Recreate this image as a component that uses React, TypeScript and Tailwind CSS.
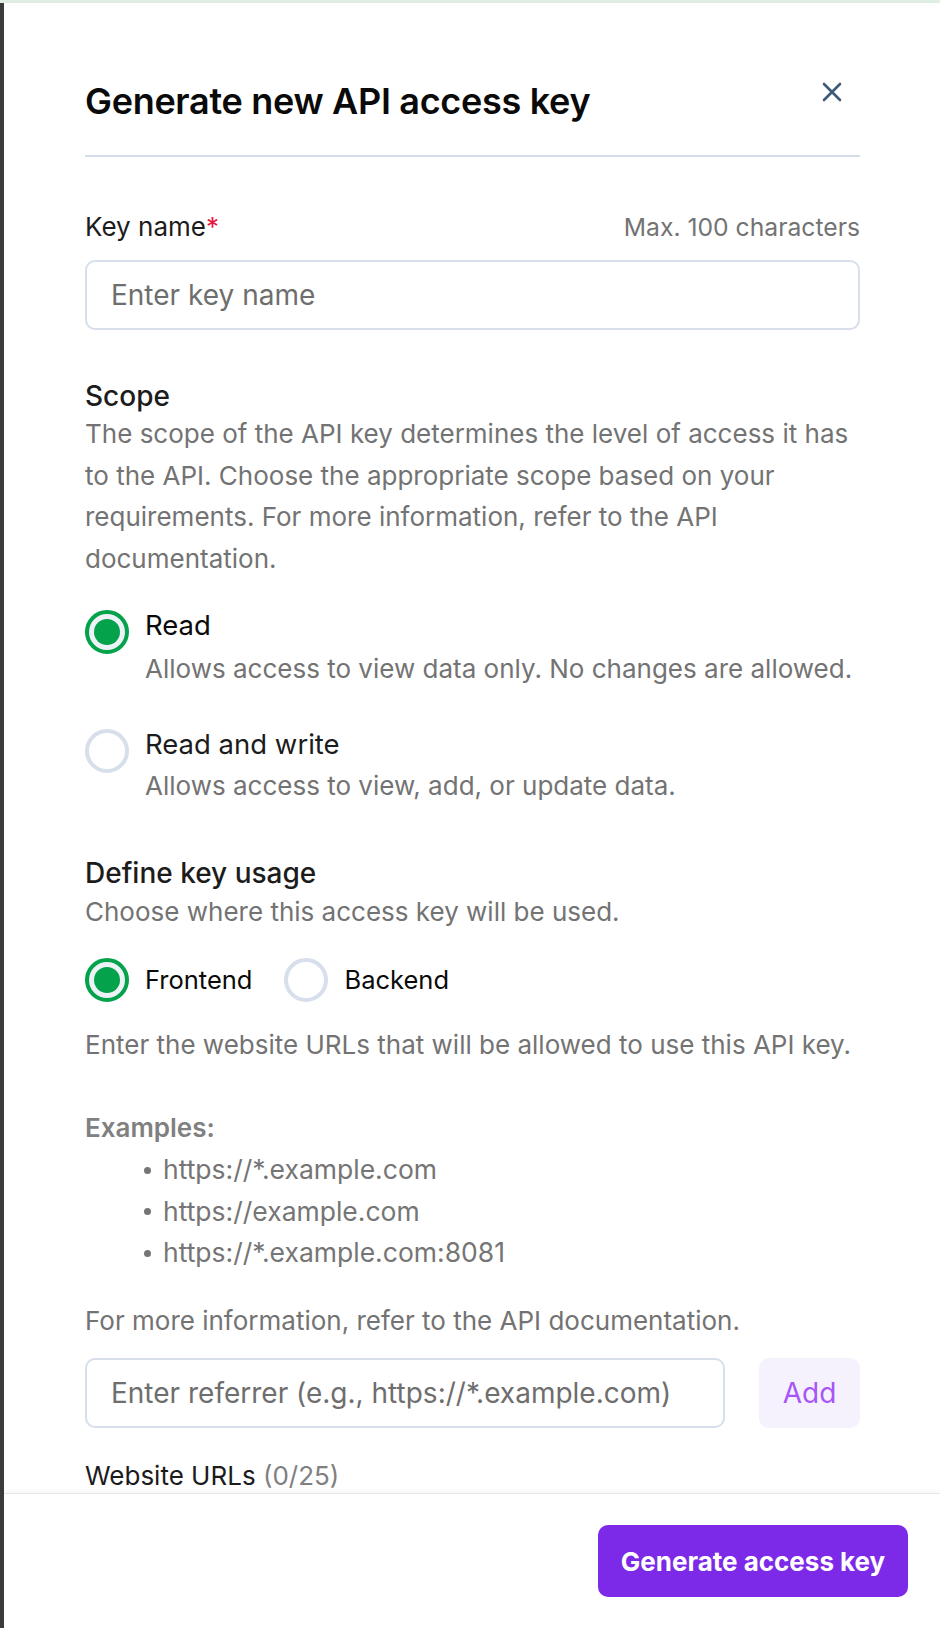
import React from "react";

function Radio({ checked }: { checked: boolean }) {
  return checked ? (
    <span className="flex h-[44px] w-[44px] shrink-0 items-center justify-center rounded-full border-[4px] border-[#03a24b] bg-[#eef2f6]">
      <span className="block h-[26px] w-[26px] rounded-full bg-[#03a24b]" />
    </span>
  ) : (
    <span className="block h-[44px] w-[44px] shrink-0 rounded-full border-[4px] border-[#d6dfea] bg-white" />
  );
}

export default function App() {
  return (
    <div
      className="flex h-[1628px] w-[940px] flex-col overflow-hidden bg-white"
      style={{ fontFamily: "Inter, 'Noto Sans', sans-serif" }}
    >
      <div className="h-[3px] w-full shrink-0 bg-[#e0ede4]" />
      <div className="flex min-h-0 flex-1">
        <div className="w-[4px] shrink-0 bg-[#3b3b3b]" />
        <div className="flex min-w-0 flex-1 flex-col">
          <div className="min-h-0 flex-1 overflow-hidden pl-[81px] pr-[80px] pt-[80px]">
            <div className="flex items-start justify-between border-b-2 border-[#d5dee8] pb-[36px]">
              <h1 className="text-[36px] font-semibold leading-[36px] tracking-[-0.3px] text-[#0a0a0a]">
                Generate new API access key
              </h1>
              <button className="mr-[18px] mt-[-1px] text-[#3d5a78]" aria-label="Close">
                <svg width="20" height="20" viewBox="0 0 20 20" fill="none" stroke="currentColor" strokeWidth="2.6" strokeLinecap="round">
                  <path d="M2 2L18 18M18 2L2 18" />
                </svg>
              </button>
            </div>

            <div className="mt-[54px] flex items-center justify-between">
              <span className="text-[26px] leading-[32px] text-[#1c1c1c]">
                Key name<span className="text-[#e8173d]">*</span>
              </span>
              <span className="text-[24.7px] leading-[32px] text-[#737373]">Max. 100 characters</span>
            </div>
            <input
              className="mt-[17px] h-[70px] w-full rounded-[10px] border-2 border-[#d6dfea] px-[24px] text-[28px] text-[#1c1c1c] outline-none placeholder:text-[#6e6e6e]"
              placeholder="Enter key name"
            />

            <div className="mt-[50px] text-[28px] font-medium leading-[32px] text-[#1c1c1c]">Scope</div>
            <p className="mt-[1px] text-[26px] leading-[41.6px] text-[#737373]">
              The scope of the API key determines the level of access it has to the API. Choose the appropriate scope
              based on your requirements. For more information, refer to the API documentation.
            </p>

            <div className="mt-[28px] flex items-start gap-[16px]">
              <div className="mt-[3px]">
                <Radio checked />
              </div>
              <div>
                <div className="text-[27.5px] leading-[36px] text-[#0a0a0a]">Read</div>
                <div className="mt-[8px] text-[26px] leading-[36px] text-[#737373]">
                  Allows access to view data only. No changes are allowed.
                </div>
              </div>
            </div>

            <div className="mt-[39px] flex items-start gap-[16px]">
              <div className="mt-[3px]">
                <Radio checked={false} />
              </div>
              <div>
                <div className="text-[27.5px] leading-[36px] text-[#1c1c1c]">Read and write</div>
                <div className="mt-[6px] text-[26px] leading-[36px] text-[#737373]">
                  Allows access to view, add, or update data.
                </div>
              </div>
            </div>

            <div className="mt-[53px] text-[28px] font-medium leading-[32px] text-[#1c1c1c]">Define key usage</div>
            <p className="mt-[2px] text-[26px] leading-[42px] text-[#737373]">Choose where this access key will be used.</p>

            <div className="mt-[25px] flex items-center gap-[32px]">
              <div className="flex items-center gap-[16px]">
                <Radio checked />
                <span className="text-[25.5px] leading-[36px] text-[#0a0a0a]">Frontend</span>
              </div>
              <div className="flex items-center gap-[16px]">
                <Radio checked={false} />
                <span className="text-[25.5px] leading-[36px] text-[#0a0a0a]">Backend</span>
              </div>
            </div>

            <p className="mt-[22px] text-[26px] leading-[42px] text-[#737373]">
              Enter the website URLs that will be allowed to use this API key.
            </p>

            <div className="mt-[41px] text-[26px] font-semibold leading-[42px] text-[#808080]">Examples:</div>
            <ul className="pl-[59px]">
              {["https://*.example.com", "https://example.com", "https://*.example.com:8081"].map((u) => (
                <li key={u} className="flex items-center gap-[12px] text-[26.5px] leading-[41.5px] text-[#757575]">
                  <span className="block h-[7px] w-[7px] rounded-full bg-[#757575]" />
                  {u}
                </li>
              ))}
            </ul>

            <p className="mt-[26px] text-[26px] leading-[42px] text-[#737373]">
              For more information, refer to the API documentation.
            </p>

            <div className="mt-[16px] flex items-center gap-[34px]">
              <input
                className="h-[70px] min-w-0 flex-1 rounded-[10px] border-2 border-[#d6dfea] px-[24px] text-[28px] text-[#1c1c1c] outline-none placeholder:text-[#6e6e6e]"
                placeholder="Enter referrer (e.g., https://*.example.com)"
              />
              <button className="h-[70px] w-[101px] rounded-[10px] bg-[#f5f2fe] text-[28px] text-[#a855f7]">Add</button>
            </div>

            <div className="mt-[32px] text-[26px] leading-[32px] text-[#1c1c1c]">
              Website URLs <span className="text-[#808080]">(0/25)</span>
            </div>
          </div>

          <div className="flex h-[135px] shrink-0 items-start justify-end border-t border-[#e3e7ec] bg-white pr-[32px] pt-[31px] shadow-[0_-2px_6px_rgba(0,0,0,0.04)]">
            <button className="h-[72px] w-[310px] rounded-[10px] bg-[#7c2ae8] text-[26px] font-bold text-white">
              Generate access key
            </button>
          </div>
        </div>
      </div>
    </div>
  );
}
